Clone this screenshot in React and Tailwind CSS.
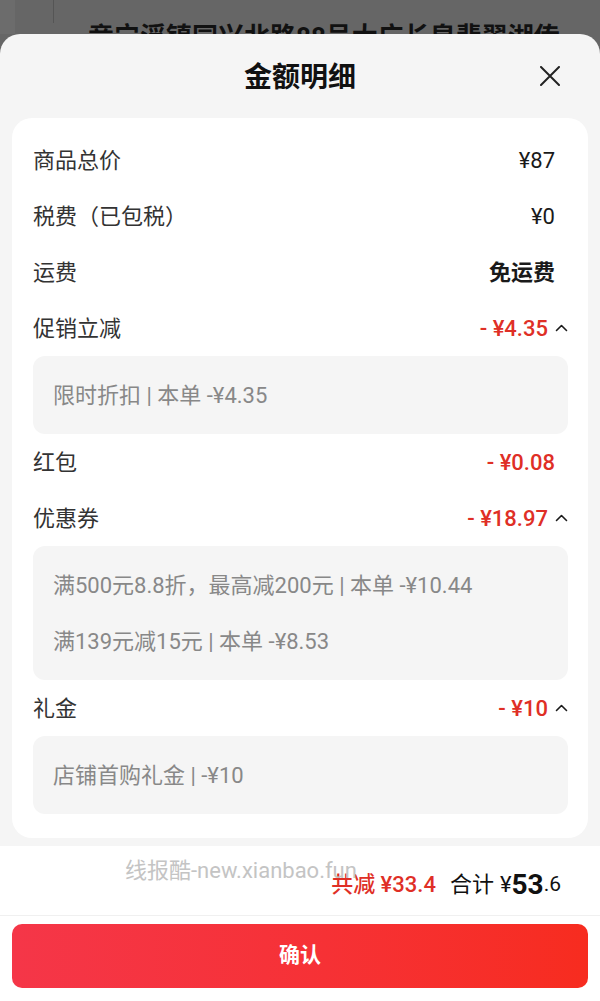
import React from 'react';

const FONT = { fontFamily: 'Roboto, "Noto Sans CJK SC", sans-serif' };

const Chevron = () => (
  <svg width="13" height="8" viewBox="0 0 13 8" className="ml-[7px]" fill="none">
    <path d="M1.5 6.5 L6.5 1.5 L11.5 6.5" stroke="#1a1a1a" strokeWidth="1.6" strokeLinecap="round" strokeLinejoin="round" />
  </svg>
);

const Row = ({ label, value, red, bold, open }) => (
  <div className="h-14 flex items-center justify-between">
    <span className="text-[22px] text-[#333]">{label}</span>
    <div className={`flex items-center ${open ? '' : 'pr-[13px]'}`}>
      <span
        className={`text-[22px] ${red ? 'text-[#df2f26] font-medium' : 'text-[#1a1a1a]'} ${bold ? 'font-semibold' : ''}`}
      >
        {value}
      </span>
      {open && <Chevron />}
    </div>
  </div>
);

const Detail = ({ lines }) => (
  <div className="bg-[#f5f5f5] rounded-[12px] px-5 py-[11px]">
    {lines.map((l) => (
      <div key={l} className="h-14 flex items-center text-[22px] text-[#888]">
        {l}
      </div>
    ))}
  </div>
);

export default function App() {
  return (
    <div className="w-[600px] h-[1001px] bg-[#666] flex flex-col overflow-hidden" style={FONT}>
      {/* page behind the sheet */}
      <div className="h-[34px] relative flex-shrink-0 overflow-hidden">
        <div className="absolute left-0 top-0 w-[15px] h-full bg-[#6c6c6c]" />
        <div className="absolute left-[53px] top-0 w-px h-[23px] bg-[#555]" />
        <p className="absolute left-[88px] top-[22px] whitespace-nowrap text-[26px] leading-[30px] font-bold text-[#111]">
          竟宁浮镇同兴北路88号大广长皇翡翠湖传
        </p>
      </div>

      {/* sheet */}
      <div className="flex-1 bg-[#f5f5f5] rounded-t-[20px] flex flex-col">
        <div className="h-[84px] relative flex items-center justify-center flex-shrink-0">
          <h1 className="text-[28px] font-bold text-[#111] mt-[3px]">金额明细</h1>
          <svg className="absolute right-[40px] top-[32px]" width="20" height="20" viewBox="0 0 20 20" fill="none">
            <path d="M1 1 L19 19 M19 1 L1 19" stroke="#222" strokeWidth="2" strokeLinecap="round" />
          </svg>
        </div>

        <div className="mx-3 bg-white rounded-[20px] pt-[14px] pb-6 pl-[21px] pr-5">
          <Row label="商品总价" value="¥87" />
          <Row label="税费（已包税）" value="¥0" />
          <Row label="运费" value="免运费" bold />
          <Row label="促销立减" value="- ¥4.35" red open />
          <Detail lines={['限时折扣 | 本单 -¥4.35']} />
          <Row label="红包" value="- ¥0.08" red />
          <Row label="优惠券" value="- ¥18.97" red open />
          <Detail lines={['满500元8.8折，最高减200元 | 本单 -¥10.44', '满139元减15元 | 本单 -¥8.53']} />
          <Row label="礼金" value="- ¥10" red open />
          <Detail lines={['店铺首购礼金 | -¥10']} />
        </div>

        <div className="mt-2 flex-1 bg-white flex flex-col">
          <div className="h-[70px] relative flex items-center justify-end pt-2 pr-[39px] border-b border-[#f0f0f0]">
            <span className="absolute left-[125px] top-[8px] text-[22px] text-[#c4c4c4]">线报酷-new.xianbao.fun</span>
            <span className="text-[22px] text-[#df2f26] font-medium">共减 ¥33.4</span>
            <span className="ml-[14px] text-[22px] text-[#111]">合计</span>
            <span className="ml-[6px] text-[22px] text-[#111]">¥</span>
            <span className="text-[28px] font-bold text-[#111] leading-none">53</span>
            <span className="text-[21px] text-[#111]">.6</span>
          </div>
          <div className="px-3 pt-2">
            <button className="w-full h-16 rounded-[10px] bg-gradient-to-r from-[#f53648] to-[#f72c1f] text-white text-[21px] font-bold">
              确认
            </button>
          </div>
        </div>
      </div>
    </div>
  );
}
